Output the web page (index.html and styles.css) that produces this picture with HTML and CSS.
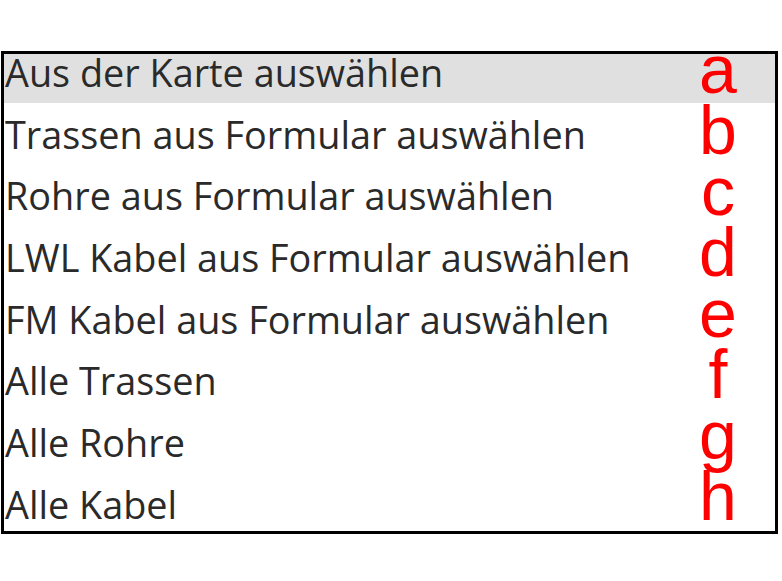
FILE: index.html
```html
<!DOCTYPE html>
<html>
<head>
<meta charset="utf-8">
<link rel="stylesheet" href="styles.css">
</head>
<body>
<div class="box">
  <ul class="list">
    <li class="item selected">Aus der Karte auswählen</li>
    <li class="item">Trassen aus Formular auswählen</li>
    <li class="item">Rohre aus Formular auswählen</li>
    <li class="item">LWL Kabel aus Formular auswählen</li>
    <li class="item">FM Kabel aus Formular auswählen</li>
    <li class="item">Alle Trassen</li>
    <li class="item">Alle Rohre</li>
    <li class="item">Alle Kabel</li>
  </ul>
  <div class="labels">
    <span>a</span><span>b</span><span>c</span><span>d</span><span>e</span><span>f</span><span>g</span><span>h</span>
  </div>
</div>
</body>
</html>
```
FILE: styles.css
```css
html, body {
  margin: 0;
  padding: 0;
  background: #fff;
}
.box {
  position: relative;
  box-sizing: border-box;
  width: 777px;
  height: 483px;
  margin: 51px 0 0 1px;
  border: 3px solid #000;
}
.list {
  list-style: none;
  margin: 0;
  padding: 0;
}
.item {
  height: 61.7px;
  padding-left: 1px;
  font-family: "Open Sans", sans-serif;
  font-size: 37.8px;
  line-height: 37px;
  color: #2a2a2a;
  white-space: nowrap;
}
.item.selected {
  background: linear-gradient(#e0e0e0, #e0e0e0) 0 0 / 100% 49px no-repeat;
}
.labels {
  position: absolute;
  top: -15px;
  left: 684px;
  width: 60px;
  display: flex;
  flex-direction: column;
  align-items: center;
  font-family: "Liberation Sans", Arial, sans-serif;
  font-size: 68px;
  line-height: 61px;
  color: #ff0000;
}
.labels span {
  display: block;
  height: 61px;
}
```
